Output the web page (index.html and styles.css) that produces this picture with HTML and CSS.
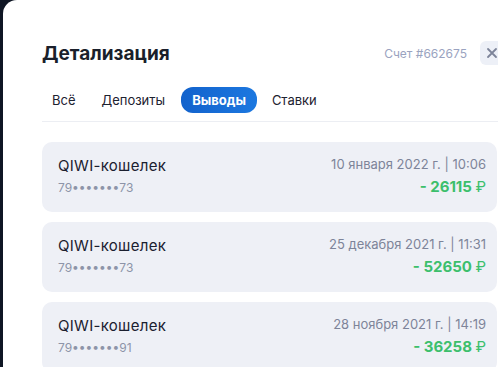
FILE: index.html
```html
<!DOCTYPE html>
<html lang="ru">
<head>
    <meta charset="UTF-8">
    <title>Детализация</title>
    <link rel="stylesheet" href="styles.css">
</head>
<body>
    <div class="modal">
        <div class="modal-head">
            <h1>Детализация</h1>
            <span class="account">Счет #662675</span>
            <div class="close">
                <svg width="12" height="12" viewBox="0 0 12 12"><path d="M2 2L10 10M10 2L2 10" stroke="#7d8499" stroke-width="1.8" stroke-linecap="round"/></svg>
            </div>
        </div>
        <div class="tabs">
            <span class="tab">Всё</span>
            <span class="tab">Депозиты</span>
            <span class="tab active">Выводы</span>
            <span class="tab">Ставки</span>
        </div>
        <div class="list">
            <div class="item">
                <div class="left">
                    <div class="name">QIWI-кошелек</div>
                    <div class="num">79•••••••73</div>
                </div>
                <div class="right">
                    <div class="date">10 января 2022 г. | 10:06</div>
                    <div class="sum">- 26115 <span class="rub">₽</span></div>
                </div>
            </div>
            <div class="item">
                <div class="left">
                    <div class="name">QIWI-кошелек</div>
                    <div class="num">79•••••••73</div>
                </div>
                <div class="right">
                    <div class="date">25 декабря 2021 г. | 11:31</div>
                    <div class="sum">- 52650 <span class="rub">₽</span></div>
                </div>
            </div>
            <div class="item">
                <div class="left">
                    <div class="name">QIWI-кошелек</div>
                    <div class="num">79•••••••91</div>
                </div>
                <div class="right">
                    <div class="date">28 ноября 2021 г. | 14:19</div>
                    <div class="sum">- 36258 <span class="rub">₽</span></div>
                </div>
            </div>
        </div>
    </div>
</body>
</html>
```

FILE: styles.css
```css
body {
    margin: 0;
    background-color: #0f1624;
    font-family: Inter, "Noto Sans", sans-serif;
    overflow: hidden;
    width: 498px;
    height: 367px;
}
.modal {
    margin-left: 3px;
    width: 495px;
    height: 367px;
    overflow: hidden;
    background-color: #fff;
    border-radius: 14px 0 0 0;
    padding: 38px 0 0 39px;
    box-sizing: border-box;
}
.modal-head {
    display: flex;
    align-items: center;
    width: 462px;
    height: 30px;
}
h1 {
    margin: 0;
    font-size: 19px;
    font-weight: 700;
    color: #1a1f2b;
    flex: 1;
}
.account {
    font-size: 12px;
    color: #9aa3c0;
    margin-right: 13px;
}
.close {
    flex-shrink: 0;
    width: 24px;
    height: 24px;
    border-radius: 6px;
    background-color: #edf0f7;
    display: flex;
    align-items: center;
    justify-content: center;
}
.tabs {
    display: flex;
    align-items: center;
    margin-top: 20px;
    width: 460px;
    height: 24px;
    padding-bottom: 9px;
    border-bottom: 1px solid #eceef3;
}
.tab {
    font-size: 13px;
    color: #1d2230;
    padding: 4px 10px;
    margin-right: 6px;
    border-radius: 12px;
}
.tab.active {
    background: linear-gradient(90deg, #1262cc, #1c78e0);
    color: #fff;
    font-weight: 700;
    padding: 5px 11px;
    margin-right: 5px;
}
.list {
    margin-top: 20px;
    width: 455px;
}
.item {
    display: flex;
    justify-content: space-between;
    background-color: #eef0f6;
    border-radius: 10px;
    padding: 14px 11px 14px 16px;
    margin-bottom: 10px;
    height: 42px;
}
.name {
    font-size: 15px;
    letter-spacing: 0.3px;
    color: #1b2030;
}
.num {
    font-size: 12px;
    color: #8d94a8;
    margin-top: 5px;
}
.right {
    text-align: right;
}
.date {
    font-size: 13px;
    color: #7d8499;
}
.sum {
    font-size: 15px;
    font-weight: 700;
    color: #3cbf6c;
    margin-top: 5px;
}
.rub {
    font-weight: 400;
}
```
